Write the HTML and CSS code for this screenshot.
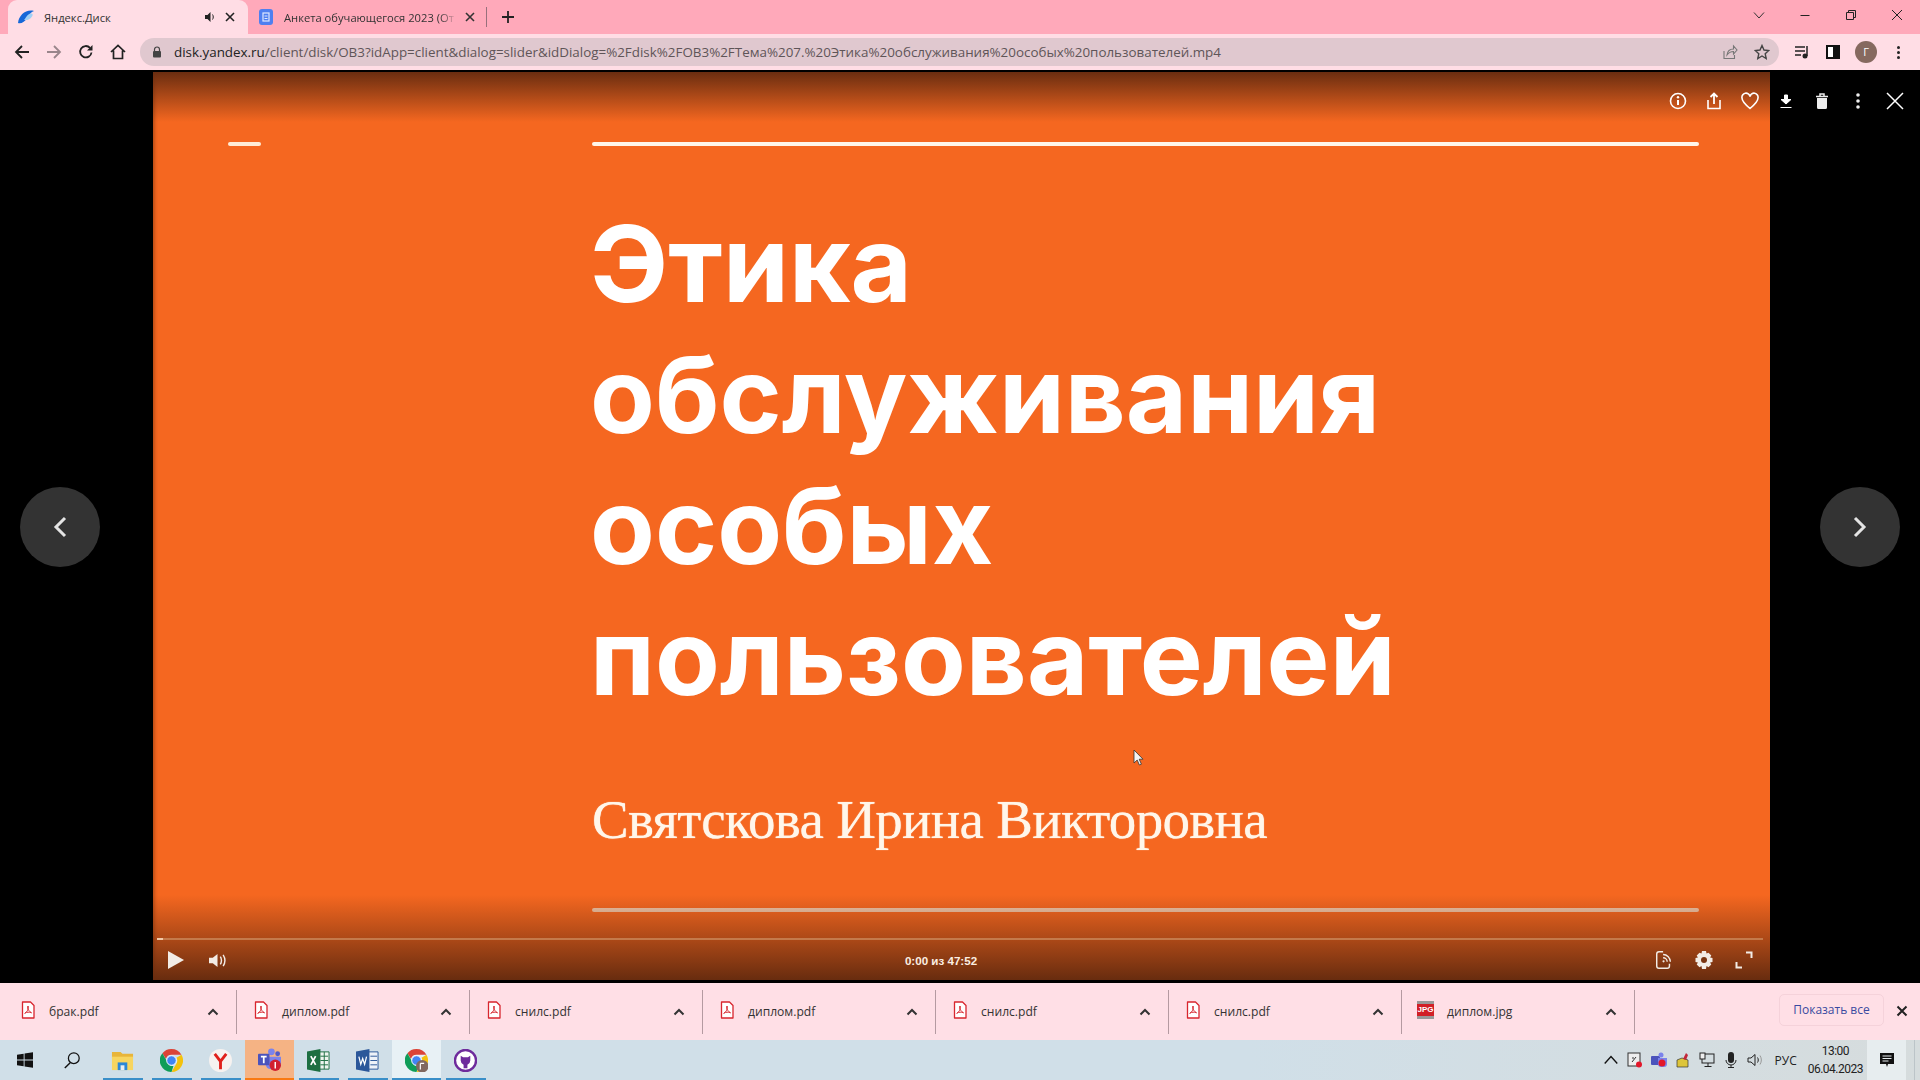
FILE: index.html
```html
<!DOCTYPE html>
<html>

<head>
  <meta charset="UTF-8">
  <meta name="viewport" content="width=device-width, initial-scale=1.0">
  <title>Яндекс.Диск</title>
  <link rel="stylesheet" href="styles.css">
</head>

<body>
  <svg class="defs" width="0" height="0">
    <symbol id="pdf" viewBox="0 0 14 18">
      <path d="M1.5 1h8l3.500 3.500V17h-11.500z" fill="#fff" stroke="#d8262e" stroke-width="1.300" stroke-linejoin="round" />
      <path d="M7 5c-1 3 1 5 3.500 7M7 5c1 3-1 6-3.500 7.500M4 12c2-1 4-1 6.500-.5" fill="none" stroke="#d8262e" stroke-width="1" />
    </symbol>
    <symbol id="chev" viewBox="0 0 12 8">
      <path d="M1.500 6.500L6 2l4.500 4.500" fill="none" stroke="#333" stroke-width="2" />
    </symbol>
  </svg>

  <div class="tabstrip">
    <div class="tab tab-active">
      <svg class="favicon" viewBox="0 0 16 16">
        <path d="M0 14C1 6 8 0 16 2c-3 1-5 4-7 7-2 4-6 6-9 5z" fill="#1668d8" />
        <path d="M6 11c2-2 3-6 7-6.500 2 0 2 1.500 1 3-2 3-5 4-8 3.500z" fill="#9fd0f5" />
      </svg>
      <span class="tab-title">Яндекс.Диск</span>
      <svg class="tab-sound" viewBox="0 0 12 12">
        <path d="M1 4h2.500L6.500 1v10L3.500 8H1z" fill="#222" />
        <path d="M8.500 3.500c1 1.500 1 3.500 0 5" fill="none" stroke="#222" />
      </svg>
      <svg class="tab-close" viewBox="0 0 10 10">
        <path d="M1 1l8 8M9 1L1 9" stroke="#222" stroke-width="1.600" />
      </svg>
    </div>
    <div class="tab">
      <svg class="favicon" viewBox="0 0 16 16">
        <rect x="1" width="14" height="16" rx="3" fill="#4f7ff0" />
        <rect x="5" y="4" width="6" height="8" fill="none" stroke="#dfe8ff" stroke-width="1.200" />
        <path d="M6.500 7h3M6.500 9.500h3" stroke="#dfe8ff" />
      </svg>
      <span class="tab-title tab-fade">Анкета обучающегося 2023 (От</span>
      <svg class="tab-close" viewBox="0 0 10 10">
        <path d="M1 1l8 8M9 1L1 9" stroke="#333" stroke-width="1.600" />
      </svg>
    </div>
    <div class="tab-sep"></div>
    <svg class="tab-new" viewBox="0 0 14 14">
      <path d="M7 1v12M1 7h12" stroke="#222" stroke-width="1.800" />
    </svg>
    <div class="win-controls">
      <svg class="win-icon" viewBox="0 0 12 12"><path d="M1 3.500l5 5.500 5-5.500" fill="none" stroke="#333" /></svg>
      <svg class="win-icon" viewBox="0 0 12 12"><path d="M1.500 6.500h9" stroke="#222" /></svg>
      <svg class="win-icon" viewBox="0 0 12 12"><path d="M1.500 3.500h7v7h-7zM3.500 3.500v-2h7v7h-2" fill="none" stroke="#222" /></svg>
      <svg class="win-icon" viewBox="0 0 12 12"><path d="M1 1l10 10M11 1L1 11" stroke="#222" /></svg>
    </div>
  </div>

  <div class="toolbar">
    <svg class="nav-icon" viewBox="0 0 16 16"><path d="M15 8H2M8 2L2 8l6 6" fill="none" stroke="#222" stroke-width="1.800" /></svg>
    <svg class="nav-icon" viewBox="0 0 16 16"><path d="M1 8h13M8 2l6 6-6 6" fill="none" stroke="#99858b" stroke-width="1.800" /></svg>
    <svg class="nav-icon" viewBox="0 0 16 16"><path d="M13.500 8.500A5.700 5.700 0 1 1 12 3.800" fill="none" stroke="#222" stroke-width="1.800" /><path d="M14.500 1v5.500H9z" fill="#222" /></svg>
    <svg class="nav-icon" viewBox="0 0 16 16"><path d="M1 8l7-6.500L15 8M3.500 6.500V14.500h9V6.500" fill="none" stroke="#222" stroke-width="1.700" /></svg>
    <div class="omnibox">
      <svg class="lock" viewBox="0 0 10 12"><path d="M2.500 5V3.500a2.500 2.500 0 0 1 5 0V5" fill="none" stroke="#444" stroke-width="1.200" /><rect x="1" y="5" width="8" height="6.500" rx="1" fill="#444" /></svg>
      <span class="url"><b>disk.yandex.ru</b>/client/disk/OB3?idApp=client&amp;dialog=slider&amp;idDialog=%2Fdisk%2FOB3%2FТема%207.%20Этика%20обслуживания%20особых%20пользователей.mp4</span>
      <svg class="omni-icon" viewBox="0 0 16 16"><path d="M2 7v7.500h10.500V11" fill="none" stroke="#777" stroke-width="1.100" /><path d="M5 11c.5-4 3-6 6.500-6V2L15 6l-3.500 4V7.500C8.500 7.500 6.500 9 5 11z" fill="none" stroke="#777" stroke-width="1.100" /></svg>
      <svg class="omni-icon" viewBox="0 0 16 16"><path d="M8 1.500l2 4.500 4.800.5-3.600 3.200 1 4.800L8 12l-4.200 2.500 1-4.800L1.200 6.500 6 6z" fill="none" stroke="#444" stroke-width="1.400" /></svg>
    </div>
    <svg class="bar-icon media-icon" viewBox="0 0 16 14"><path d="M1 2h10M1 6h10M1 10h6" stroke="#222" stroke-width="1.500" /><path d="M13 1v10" stroke="#222" stroke-width="1.500" /><circle cx="11" cy="11" r="2.500" fill="#222" /></svg>
    <div class="side-icon"></div>
    <div class="avatar">Г</div>
    <div class="kebab"><i></i><i></i><i></i></div>
  </div>

  <div class="viewer">
    <div class="side side-left">
      <div class="round-btn">
        <svg viewBox="0 0 16 24"><path d="M13 3L4 12l9 9" fill="none" stroke="#e4e4e4" stroke-width="3" /></svg>
      </div>
    </div>

    <div class="slide">
      <div class="slide-rules">
        <div class="rule-short"></div>
        <div class="rule-long"></div>
      </div>
      <h1 class="slide-title">Этика<br>обслуживания<br>особых<br>пользователей</h1>
      <div class="slide-author">Святскова Ирина Викторовна</div>
      <div class="rule-long rule-bottom"></div>

      <div class="shade-top"></div>
      <div class="player-bar">
        <div class="progress"></div>
        <div class="player-row">
          <div class="player-group">
            <svg class="play" viewBox="0 0 16 18"><path d="M0 0l16 9-16 9z" fill="#f2ece6" /></svg>
            <svg class="vol" viewBox="0 0 20 18"><path d="M1 6h4l5-4v14l-5-4H1z" fill="#f2ece6" /><path d="M13 5c1.500 2.500 1.500 5.500 0 8M16 3c2.500 4 2.500 8 0 12" fill="none" stroke="#f2ece6" stroke-width="1.500" /></svg>
          </div>
          <span class="player-time">0:00 из 47:52</span>
          <div class="player-group player-right">
            <svg class="ctl" viewBox="0 0 20 22"><path d="M9 2H4.500A2.500 2.500 0 0 0 2 4.500v13A2.500 2.500 0 0 0 4.500 20h9a2.500 2.500 0 0 0 2.500-2.500V15" fill="none" stroke="#f2ece6" stroke-width="1.600" /><path d="M9 5a8 8 0 0 1 8 8M9 8.500a4.500 4.500 0 0 1 4.500 4.500" fill="none" stroke="#f2ece6" stroke-width="1.500" /><circle cx="9.500" cy="12.500" r="1.200" fill="#f2ece6" /></svg>
            <svg class="ctl" viewBox="0 0 20 20"><path d="M8 1h4l.5 2.500 2-.8 2.800 2.800-1.200 2L18.500 8v4l-2.400.5 1.200 2-2.800 2.800-2-1.200-.5 2.900H8l-.5-2.900-2 1.200-2.800-2.800 1.200-2L1.500 12V8l2.400-.5-1.200-2 2.800-2.800 2 .8z" fill="#f2ece6" /><circle cx="10" cy="10" r="3" fill="#7a3512" /></svg>
            <svg class="ctl" viewBox="0 0 20 20"><path d="M12 2.500h5.500V8M2.500 12v5.500H8" fill="none" stroke="#f2ece6" stroke-width="2" /></svg>
          </div>
        </div>
      </div>

      <svg class="pointer" viewBox="0 0 12 18"><path d="M1 1v13l3.200-3 2.200 5 2-.8-2.200-5H10z" fill="#f4f4f4" stroke="#333" stroke-width=".8" /></svg>
    </div>

    <div class="side side-right">
      <div class="round-btn">
        <svg viewBox="0 0 16 24"><path d="M3 3l9 9-9 9" fill="none" stroke="#e4e4e4" stroke-width="3" /></svg>
      </div>
    </div>

    <div class="viewer-actions">
      <svg class="act" viewBox="0 0 18 18"><circle cx="9" cy="9" r="7.500" fill="none" stroke="#fff" stroke-width="1.600" /><path d="M9 8v5" stroke="#fff" stroke-width="2" /><circle cx="9" cy="5.300" r="1.200" fill="#fff" /></svg>
      <svg class="act" viewBox="0 0 18 18"><path d="M3 8v8.500h12V8" fill="none" stroke="#fff" stroke-width="1.600" /><path d="M9 12V2M5.500 5L9 1.500 12.500 5" fill="none" stroke="#fff" stroke-width="1.800" /></svg>
      <svg class="act" viewBox="0 0 18 18"><path d="M9 16.500C3 11.500 1 9 1 6a4 4 0 0 1 8-1.500A4 4 0 0 1 17 6c0 3-2 5.500-8 10.500z" fill="none" stroke="#fff" stroke-width="1.600" /></svg>
      <svg class="act" viewBox="0 0 18 18"><path d="M7.500 3h3v4.500H14L9 12 4 7.500h3.500zM3.500 15.500h11" fill="#fff" stroke="#fff" stroke-width="1" /></svg>
      <svg class="act" viewBox="0 0 18 18"><path d="M3 4.500h12M7 4V2h4v2" fill="none" stroke="#eee" stroke-width="1.500" /><path d="M4 6h10v9.500a1.500 1.500 0 0 1-1.500 1.500h-7A1.500 1.500 0 0 1 4 15.500z" fill="#eee" /></svg>
      <svg class="act" viewBox="0 0 18 18"><circle cx="9" cy="3" r="1.800" fill="#eee" /><circle cx="9" cy="9" r="1.800" fill="#eee" /><circle cx="9" cy="15" r="1.800" fill="#eee" /></svg>
      <svg class="act act-close" viewBox="0 0 18 18"><path d="M1 1l16 16M17 1L1 17" stroke="#fff" stroke-width="1.500" /></svg>
    </div>
  </div>

  <div class="shelf">
    <div class="dl"><svg class="dl-icon"><use href="#pdf" /></svg><span class="dl-name">брак.pdf</span><svg class="dl-chev"><use href="#chev" /></svg></div>
    <div class="dl"><svg class="dl-icon"><use href="#pdf" /></svg><span class="dl-name">диплом.pdf</span><svg class="dl-chev"><use href="#chev" /></svg></div>
    <div class="dl"><svg class="dl-icon"><use href="#pdf" /></svg><span class="dl-name">снилс.pdf</span><svg class="dl-chev"><use href="#chev" /></svg></div>
    <div class="dl"><svg class="dl-icon"><use href="#pdf" /></svg><span class="dl-name">диплом.pdf</span><svg class="dl-chev"><use href="#chev" /></svg></div>
    <div class="dl"><svg class="dl-icon"><use href="#pdf" /></svg><span class="dl-name">снилс.pdf</span><svg class="dl-chev"><use href="#chev" /></svg></div>
    <div class="dl"><svg class="dl-icon"><use href="#pdf" /></svg><span class="dl-name">снилс.pdf</span><svg class="dl-chev"><use href="#chev" /></svg></div>
    <div class="dl">
      <span class="jpg-icon">JPG</span>
      <span class="dl-name">диплом.jpg</span><svg class="dl-chev"><use href="#chev" /></svg>
    </div>
    <button class="show-all">Показать все</button>
    <svg class="shelf-close" viewBox="0 0 12 12"><path d="M1.500 1.500l9 9M10.500 1.500l-9 9" stroke="#222" stroke-width="2" /></svg>
  </div>

  <div class="taskbar">
    <div class="task-item">
      <svg class="task-icon start" viewBox="0 0 18 18"><path d="M0 3l7.500-1.100V8.500H0zM8.500 1.700L18 .3v8.200H8.500zM0 9.500h7.500V16L0 15zM8.500 9.500H18v8.200l-9.500-1.400z" fill="#111" /></svg>
    </div>
    <div class="task-item">
      <svg class="task-icon find" viewBox="0 0 20 20"><circle cx="12" cy="8" r="6" fill="none" stroke="#111" stroke-width="1.400" /><path d="M8 13l-6 6" stroke="#111" stroke-width="1.600" /></svg>
    </div>
    <div class="task-item task-open">
      <svg class="task-icon" viewBox="0 0 24 24"><path d="M1 3h9l2 2h11v5H1z" fill="#e8b53a" /><path d="M1 8h22v14H1z" fill="#f7d560" /><path d="M7 14h10v8H7z" fill="#2b88d8" /><path d="M10 17h4v5h-4z" fill="#e9eef2" /></svg>
    </div>
    <div class="task-item task-open">
      <svg class="task-icon" viewBox="0 0 24 24"><path d="M12 0a12 12 0 0 1 10.400 6H12a6 6 0 0 0-5.800 4.500L2.500 4.500A12 12 0 0 1 12 0z" fill="#db4437" /><path d="M22.400 6A12 12 0 0 1 12 24l5.200-9A6 6 0 0 0 17.200 9z" fill="#f4c20d" /><path d="M12 24A12 12 0 0 1 2.500 4.500L7.700 13.500A6 6 0 0 0 14 17.700z" fill="#0f9d58" /><circle cx="12" cy="12" r="5" fill="#4285f4" stroke="#fff" stroke-width="1" /></svg>
    </div>
    <div class="task-item task-open">
      <svg class="task-icon" viewBox="0 0 24 24"><circle cx="12" cy="12" r="12" fill="#f6f2f0" /><path d="M6 5l6 8 6-8M12 13v8" fill="none" stroke="#e0201b" stroke-width="3" /></svg>
    </div>
    <div class="task-item task-teams">
      <svg class="task-icon" viewBox="0 0 24 24"><circle cx="14" cy="4" r="3.500" fill="#7b83eb" /><circle cx="20.500" cy="6" r="2.500" fill="#5059c9" /><path d="M8 9h16v8a5 5 0 0 1-5 5h-6a5 5 0 0 1-5-5z" fill="#7b83eb" /><rect y="6" width="12" height="12" rx="1" fill="#4b53bc" /><path d="M3 9h6M6 9v7" stroke="#fff" stroke-width="1.800" /><circle cx="18" cy="18" r="6" fill="#d1202f" /><path d="M18 14.500v7" stroke="#fff" stroke-width="1.500" /></svg>
    </div>
    <div class="task-item task-open">
      <svg class="task-icon" viewBox="0 0 24 24"><path d="M13 3h10v18H13z" fill="#eef5ef" stroke="#1d6f42" /><path d="M14 7.500h8M14 12h8M14 16.500h8M18 3v18" stroke="#1d6f42" /><path d="M0 2.500L14 0v24L0 21.500z" fill="#1d6f42" /><path d="M4 7.500l5 9M9 7.500l-5 9" stroke="#fff" stroke-width="1.800" /></svg>
    </div>
    <div class="task-item task-open">
      <svg class="task-icon" viewBox="0 0 24 24"><path d="M13 3h10v18H13z" fill="#eef2f9" stroke="#2b579a" /><path d="M15 7.500h7M15 12h7M15 16.500h7" stroke="#2b579a" /><path d="M0 2.500L14 0v24L0 21.500z" fill="#2b579a" /><path d="M3 8l2 8 2-6 2 6 2-8" fill="none" stroke="#fff" stroke-width="1.300" /></svg>
    </div>
    <div class="task-item task-light">
      <svg class="task-icon" viewBox="0 0 24 24"><path d="M12 0a12 12 0 0 1 10.400 6H12a6 6 0 0 0-5.800 4.500L2.500 4.500A12 12 0 0 1 12 0z" fill="#db4437" /><path d="M22.400 6A12 12 0 0 1 12 24l5.200-9A6 6 0 0 0 17.200 9z" fill="#f4c20d" /><path d="M12 24A12 12 0 0 1 2.500 4.500L7.700 13.500A6 6 0 0 0 14 17.700z" fill="#0f9d58" /><circle cx="12" cy="12" r="5" fill="#4285f4" stroke="#fff" stroke-width="1" /><circle cx="18" cy="18" r="6.500" fill="#80685f" /><path d="M16 15h4M16 15v6.500" stroke="#fff" stroke-width="1.200" /></svg>
    </div>
    <div class="task-item task-open">
      <svg class="task-icon" viewBox="0 0 24 24"><circle cx="12" cy="12" r="11" fill="#fff" stroke="#6e2b9c" stroke-width="2.500" /><path d="M7 7l2.500 1.500h5L17 7v5a5 5 0 0 1-3 4.500V20h-4v-3.500A5 5 0 0 1 7 12z" fill="#6e2b9c" /></svg>
    </div>

    <div class="tray">
      <svg class="tray-icon" viewBox="0 0 14 14"><path d="M1.500 10L7 4l5.500 6" fill="none" stroke="#111" stroke-width="1.200" /></svg>
      <svg class="tray-icon" viewBox="0 0 16 16"><rect x="1" y="1" width="12" height="13" fill="#eee" stroke="#333" /><path d="M5 10l4-5M5 6h2" stroke="#333" /><circle cx="12" cy="12.500" r="3" fill="#e3172a" /></svg>
      <svg class="tray-icon" viewBox="0 0 16 16"><rect y="4" width="9" height="9" rx="1" fill="#4b53bc" /><circle cx="10" cy="3" r="2.500" fill="#7b83eb" /><path d="M7 6h9v6a3 3 0 0 1-3 3h-3a3 3 0 0 1-3-3z" fill="#7b83eb" /><circle cx="11" cy="11" r="3.500" fill="#e3172a" /></svg>
      <svg class="tray-icon" viewBox="0 0 16 16"><path d="M2 8l5-2 6 2v7H2z" fill="#ddc53a" stroke="#333" stroke-width=".7" /><path d="M8 7l3-6 2 2-2 5z" fill="#c2273a" /></svg>
      <svg class="tray-icon" viewBox="0 0 16 16"><rect x="3" y="2" width="12" height="9" fill="none" stroke="#222" /><rect x="1" y="1" width="5" height="6" fill="#eee" stroke="#222" /><path d="M9 11v3M5.500 14.500h7" stroke="#222" /></svg>
      <svg class="tray-icon" viewBox="0 0 16 16"><rect x="5" y="0" width="6" height="11" rx="3" fill="#222" /><path d="M3 8a5 5 0 0 0 10 0M8 13v2M5 15.500h6" fill="none" stroke="#222" /></svg>
      <svg class="tray-icon" viewBox="0 0 16 16"><path d="M1 6h3l4-3.500v11L4 10H1z" fill="none" stroke="#222" /><path d="M10.500 5.500c1 1.500 1 3.500 0 5" fill="none" stroke="#222" /><path d="M13 3.500c1.800 3 1.800 6 0 9" fill="none" stroke="#999" /></svg>
      <span class="tray-lang">РУС</span>
      <div class="clock">
        <span>13:00</span>
        <span>06.04.2023</span>
      </div>
      <div class="notify">
        <svg class="notify-icon" viewBox="0 0 16 16"><path d="M1 1h14v11H9l-1 3-1-3H1z" fill="#111" /><path d="M3.500 4h9M3.500 6.500h9M3.500 9h6" stroke="#e7edef" /></svg>
      </div>
      <div class="desktop-edge"></div>
    </div>
  </div>
</body>

</html>
```

FILE: styles.css
```css
body {
  margin: 0;
  width: 1920px;
  height: 1080px;
  overflow: hidden;
  display: flex;
  flex-direction: column;
  font-family: 'Open Sans', 'Noto Sans', sans-serif;
  color: #222;
  background-color: #000;
}

svg {
  display: block;
  flex: none;
}

.defs {
  position: absolute;
}

/* window chrome */
.tabstrip {
  height: 34px;
  flex: none;
  display: flex;
  align-items: center;
  background-color: #ffa9ba;
}

.tab {
  width: 240px;
  height: 34px;
  box-sizing: border-box;
  padding: 0 10px;
  display: flex;
  align-items: center;
  font-size: 11.200px;
}

.tab-active {
  margin-left: 8px;
  background-color: #ffdde5;
  border-radius: 9px 9px 0 0;
}

.favicon {
  width: 16px;
  height: 16px;
  margin-right: 10px;
}

.tab-title {
  flex: 1;
  overflow: hidden;
  white-space: nowrap;
  color: #333;
}

.tab-fade {
  -webkit-mask-image: linear-gradient(90deg, #000 90%, transparent);
  mask-image: linear-gradient(90deg, #000 90%, transparent);
}

.tab-sound {
  width: 12px;
  height: 12px;
  margin-right: 1px;
}

.tab-close {
  width: 10px;
  height: 10px;
  margin: 0 3px 0 8px;
}

.tab-sep {
  width: 1px;
  height: 20px;
  margin-left: -2px;
  background-color: #98707c;
}

.tab-new {
  width: 14px;
  height: 14px;
  margin-left: 14px;
}

.win-controls {
  margin-left: auto;
  margin-right: 17px;
  margin-top: -5px;
  display: flex;
  gap: 34px;
}

.win-icon {
  width: 12px;
  height: 12px;
}

.toolbar {
  height: 36px;
  flex: none;
  box-sizing: border-box;
  padding: 0 9px 0 14px;
  display: flex;
  align-items: center;
  background-color: #ffdde5;
}

.nav-icon {
  width: 16px;
  height: 16px;
  margin-right: 16px;
}

.omnibox {
  width: 1639px;
  height: 28px;
  margin-left: -2px;
  box-sizing: border-box;
  padding: 0 9px 0 12px;
  display: flex;
  align-items: center;
  border-radius: 14px;
  background-color: #e0c8cf;
  font-size: 13.400px;
  color: #5f5558;
}

.lock {
  width: 10px;
  height: 12px;
  margin-right: 12px;
}

.url {
  flex: 1;
  white-space: nowrap;
  overflow: hidden;
}

.url b {
  font-weight: normal;
  color: #222;
}

.omni-icon {
  width: 16px;
  height: 16px;
  margin-left: 16px;
}

.bar-icon {
  width: 16px;
  height: 14px;
}

.media-icon {
  margin-left: 15px;
}

.side-icon {
  width: 14px;
  height: 14px;
  margin-left: 16px;
  box-sizing: border-box;
  background-color: #fff;
  border: 2px solid #111;
  border-left-width: 7px;
  transform: scaleX(-1);
}

.avatar {
  width: 22px;
  height: 22px;
  margin-left: 15px;
  border-radius: 50%;
  background-color: #86695f;
  color: #fff;
  font-size: 11px;
  line-height: 22px;
  text-align: center;
}

.kebab {
  margin-left: 20px;
  display: flex;
  flex-direction: column;
  gap: 2px;
}

.kebab i {
  width: 3px;
  height: 3px;
  border-radius: 50%;
  background-color: #222;
}

/* video viewer */
.viewer {
  height: 913px;
  flex: none;
  position: relative;
  display: flex;
  background-color: #000;
}

.side {
  width: 153px;
  flex: none;
  box-sizing: border-box;
  display: flex;
  align-items: center;
}

.side-left {
  padding-left: 20px;
}

.side-right {
  width: 150px;
  padding-left: 50px;
}

.round-btn {
  width: 80px;
  height: 80px;
  display: flex;
  align-items: center;
  justify-content: center;
  border-radius: 50%;
  background-color: #333;
}

.round-btn svg {
  width: 16px;
  height: 24px;
}

.slide {
  width: 1617px;
  flex: none;
  margin: 2px 0 3px;
  box-sizing: border-box;
  padding: 70px 71px 68px 75px;
  position: relative;
  display: flex;
  flex-direction: column;
  background-color: #f56720;
  color: #fff;
  box-shadow: inset 3px 0 3px -1px rgba(60, 20, 0, 0.3);
}

.slide-rules {
  display: flex;
  gap: 331px;
}

.rule-short {
  width: 33px;
  height: 4px;
  background-color: #ffecd6;
  border-radius: 2px;
}

.rule-long {
  flex: 1;
  height: 4px;
  background-color: #fff6ea;
  border-radius: 2px;
}

.slide-title {
  margin: 53px 0 0 362px;
  font-family: Inter, 'Open Sans', sans-serif;
  font-size: 105.800px;
  font-weight: 700;
  line-height: 131px;
  color: #fff;
}

.slide-author {
  margin: 65px 0 0 364px;
  font-family: 'Liberation Serif', serif;
  font-size: 55px;
  letter-spacing: -0.700px;
  color: #fff6ea;
  text-shadow: 0 0 1px #fff6ea;
}

.rule-bottom {
  flex: none;
  height: 4px;
  margin: auto 0 0 364px;
  background-color: #f0c8ab;
}

.shade-top {
  position: absolute;
  top: 0;
  left: 0;
  right: 0;
  height: 50px;
  background: linear-gradient(#6a2d10, rgba(245, 103, 32, 0));
}

.player-bar {
  position: absolute;
  left: 0;
  right: 0;
  bottom: 0;
  height: 85px;
  box-sizing: border-box;
  padding: 43px 7px 0 4px;
  background: linear-gradient(rgba(245, 103, 32, 0), #682c0f);
}

.progress {
  height: 2px;
  background-color: #c47a4b;
  border-left: 6px solid #f2c9a8;
}

.player-row {
  height: 40px;
  display: flex;
  align-items: center;
  padding: 0 9px 0 11px;
}

.player-group {
  width: 380px;
  display: flex;
  align-items: center;
  gap: 24px;
}

.player-right {
  width: 420px;
  justify-content: flex-end;
}

.play {
  width: 16px;
  height: 18px;
}

.vol {
  width: 19px;
  height: 17px;
}

.ctl {
  width: 20px;
  height: 20px;
  margin-left: -4px;
}

.player-time {
  flex: 1;
  text-align: center;
  font-family: 'Liberation Sans', sans-serif;
  font-size: 11.600px;
  font-weight: 700;
  color: #fbeee2;
}

.pointer {
  position: absolute;
  left: 980px;
  top: 677px;
  width: 12px;
  height: 18px;
}

.viewer-actions {
  position: absolute;
  top: 22px;
  right: 16px;
  display: flex;
  gap: 18px;
}

.act {
  width: 18px;
  height: 18px;
}

.act-close {
  margin-left: 1px;
}

/* download shelf */
.shelf {
  height: 57px;
  flex: none;
  box-sizing: border-box;
  padding-left: 4px;
  display: flex;
  align-items: center;
  background-color: #ffdfe6;
}

.dl {
  width: 233px;
  height: 44px;
  box-sizing: border-box;
  padding: 0 17px 0 17px;
  display: flex;
  align-items: center;
  border-right: 1px solid #b59aa1;
  font-size: 12.100px;
  color: #333;
}

.dl-icon {
  width: 14px;
  height: 18px;
  margin-top: -4px;
}

.dl-name {
  flex: 1;
  margin-left: 14px;
}

.dl-chev {
  width: 12px;
  height: 8px;
}

.jpg-icon {
  width: 17px;
  height: 12px;
  margin: -4px -1px 0 -2px;
  background-color: #d11f26;
  border-top: 3px solid #999;
  border-bottom: 3px solid #999;
  color: #fff;
  font-family: 'Liberation Sans', sans-serif;
  font-size: 8px;
  font-weight: 700;
  line-height: 12px;
  text-align: center;
}

.show-all {
  width: 105px;
  height: 32px;
  margin: -4px 0 0 144px;
  border: 1px solid #f5d2da;
  border-radius: 5px;
  background-color: #ffdfe6;
  font-family: 'Open Sans', sans-serif;
  font-size: 12px;
  color: #3a4aa0;
}

.shelf-close {
  width: 12px;
  height: 12px;
  margin: -2px 0 0 12px;
}

/* windows taskbar */
.taskbar {
  height: 40px;
  flex: none;
  display: flex;
  background: linear-gradient(90deg, #d0dfe8, #d0dfe8 65%, #d6dcdd);
}

.task-item {
  width: 49px;
  height: 40px;
  box-sizing: border-box;
  display: flex;
  align-items: center;
  justify-content: center;
}

.task-open {
  background: linear-gradient(#3a8fc8, #3a8fc8) center bottom / 40px 2px no-repeat;
}

.task-teams {
  background-color: #f5b384;
  border-bottom: 2px solid #f97a12;
}

.task-light {
  background: linear-gradient(#3a8fc8, #3a8fc8) center bottom / 100% 2px no-repeat, #e8f1f5;
}

.task-icon {
  width: 23px;
  height: 23px;
}

.start {
  width: 16px;
  height: 16px;
}

.find {
  width: 18px;
  height: 18px;
  margin-left: -3px;
}

.tray {
  margin-left: auto;
  display: flex;
  align-items: center;
  gap: 8px;
  font-size: 12px;
  color: #222;
}

.tray-icon {
  width: 16px;
  height: 16px;
}

.tray-lang {
  margin-left: 4px;
}

.clock {
  margin-left: 3px;
  display: flex;
  flex-direction: column;
  align-items: center;
  font-family: Roboto, sans-serif;
  letter-spacing: -0.500px;
  line-height: 18px;
}

.notify {
  width: 39px;
  height: 40px;
  margin-left: -4px;
  display: flex;
  align-items: center;
  justify-content: center;
  background-color: #e7edef;
}

.notify-icon {
  width: 16px;
  height: 16px;
}

.desktop-edge {
  width: 1px;
  height: 40px;
  margin: 0 5px 0 0;
  background-color: #bcc4c8;
}
```
